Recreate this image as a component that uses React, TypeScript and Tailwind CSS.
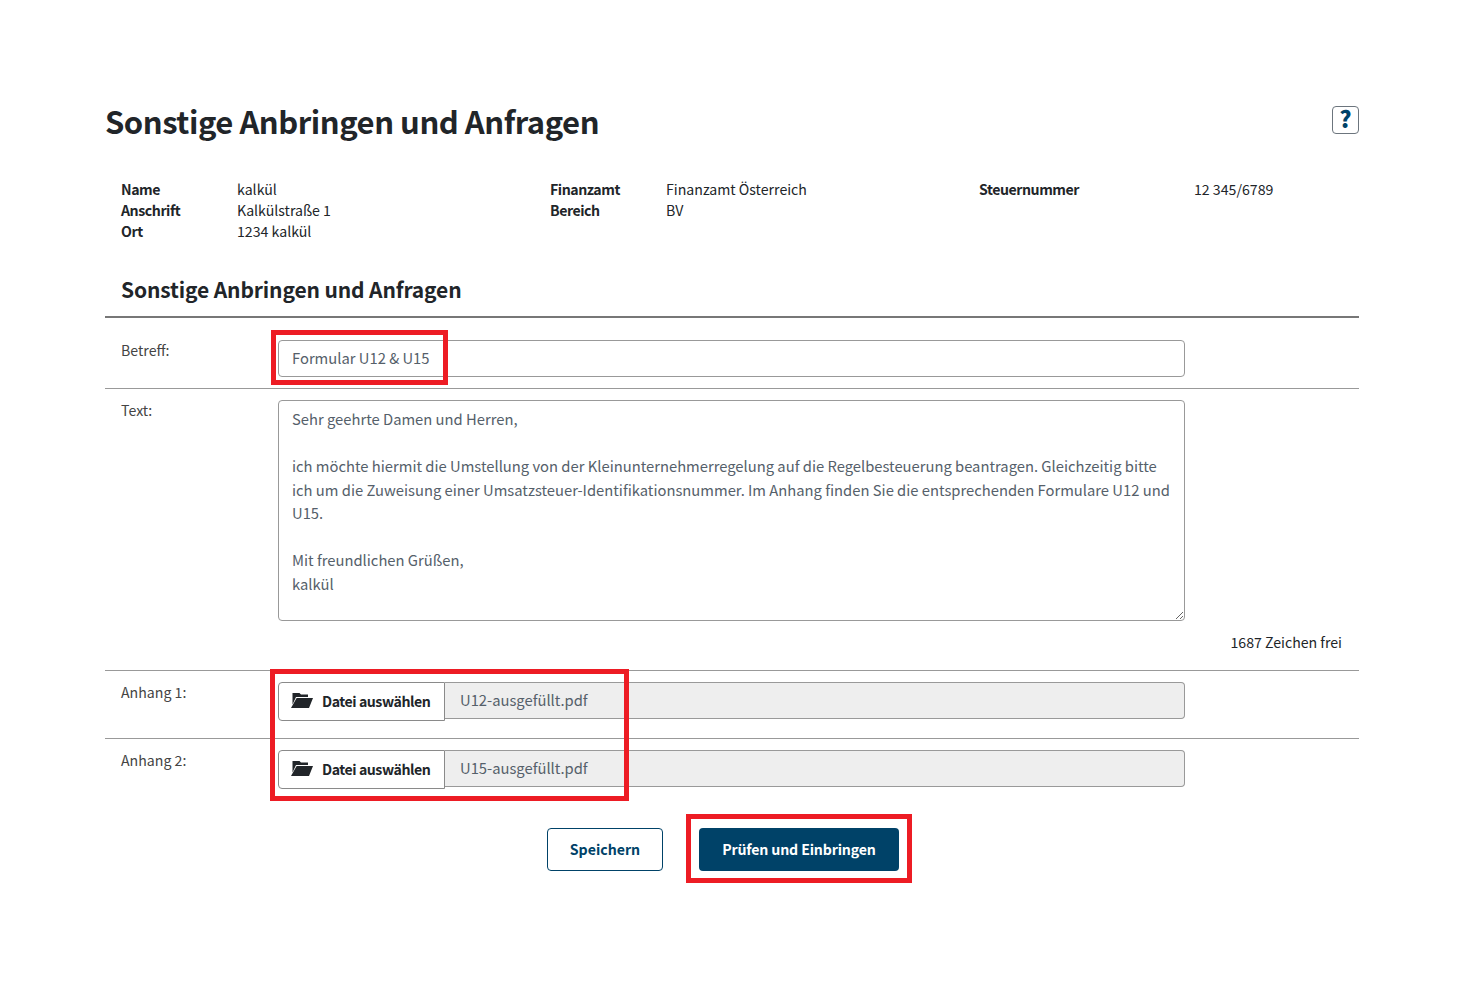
const font = { fontFamily: '"Noto Sans CJK SC", "Noto Sans", sans-serif' };

function Folder() {
  return (
    <svg width="22" height="16" viewBox="0 0 22 16" className="mb-[3px] shrink-0">
      <path d="M1.5 1H8.5L10 2.5H17V5H5L1.5 12.5z" fill="#212529" />
      <path d="M5.6 6H22L18 16H0z" fill="#212529" />
    </svg>
  );
}

function Info({ label, value, labelW }: { label: string; value: string; labelW: string }) {
  return (
    <div className="flex h-[21px] leading-[21px]">
      <div className={`${labelW} font-semibold tracking-[-0.45px]`}>{label}</div>
      <div>{value}</div>
    </div>
  );
}

function FileRow({ label, file, height }: { label: string; file: string; height: string }) {
  return (
    <div className={`flex border-t border-[#999] ${height}`}>
      <div className="w-[173px] pl-4 pt-[9px] text-[#444] leading-[24px]">{label}</div>
      <div className="flex w-[907px] pt-[11px] items-start">
        <div className="flex h-[39px] w-[167px] items-center gap-[9px] whitespace-nowrap rounded-l-[4px] border border-[#8a8a8a] pl-[12px] font-semibold tracking-[-0.45px] text-[#212529]">
          <Folder />
          <span>Datei auswählen</span>
        </div>
        <div className="flex h-[37px] flex-1 items-center rounded-r-[4px] border border-l-0 border-[#999] bg-[#eeeeee] pl-[15px] text-[14.77px] text-[#55606a]">
          {file}
        </div>
      </div>
    </div>
  );
}

const message = `Sehr geehrte Damen und Herren,

ich möchte hiermit die Umstellung von der Kleinunternehmerregelung auf die Regelbesteuerung beantragen. Gleichzeitig bitte ich um die Zuweisung einer Umsatzsteuer-Identifikationsnummer. Im Anhang finden Sie die entsprechenden Formulare U12 und U15.

Mit freundlichen Grüßen,
kalkül`;

export default function App() {
  return (
    <div className="relative h-[990px] w-[1472px] bg-white text-[14.15px] text-[#212529]" style={font}>
      <div className="ml-[105px] w-[1254px] pt-[100px]">
        <div className="flex h-[46px] items-center justify-between">
          <h1 className="mb-[4px] text-[31px] font-semibold leading-[44px] tracking-[-0.47px] text-[#212529]">Sonstige Anbringen und Anfragen</h1>
          <div className="mb-[7px] flex h-[28px] w-[27px] items-center justify-center rounded-[4px] border border-[#6c757d] pb-[2px] text-[23px] font-black leading-none text-[#004268]">?</div>
        </div>

        <div className="mt-[33px] grid grid-cols-[429px_429px_380px] pl-4">
          <div>
            <Info label="Name" value="kalkül" labelW="w-[116px]" />
            <Info label="Anschrift" value="Kalkülstraße 1" labelW="w-[116px]" />
            <Info label="Ort" value="1234 kalkül" labelW="w-[116px]" />
          </div>
          <div>
            <Info label="Finanzamt" value="Finanzamt Österreich" labelW="w-[116px]" />
            <Info label="Bereich" value="BV" labelW="w-[116px]" />
          </div>
          <div>
            <Info label="Steuernummer" value="12 345/6789" labelW="w-[215px]" />
          </div>
        </div>

        <h2 className="mt-[25px] box-content h-[49px] border-b-2 border-[#777] pl-4 text-[21px] font-semibold leading-[45px] tracking-[-0.13px] text-[#212529]">
          Sonstige Anbringen und Anfragen
        </h2>

        <div className="flex h-[70px]">
          <div className="w-[173px] pl-4 pt-[20px] leading-[24px] text-[#444]">Betreff:</div>
          <div className="w-[907px] pt-[22px]">
            <input readOnly value="Formular U12 & U15" className="h-[37px] w-full rounded-[4px] border border-[#999] bg-white px-[13px] pb-[2px] text-[14.77px] text-[#55606a] outline-none" />
          </div>
        </div>

        <div className="flex h-[282px] border-t border-[#999]">
          <div className="w-[173px] pl-4 pt-[9px] leading-[24px] text-[#444]">Text:</div>
          <div className="flex-1 pt-[11px]">
            <textarea
              readOnly
              value={message}
              className="block h-[221px] w-[907px] resize-y rounded-[4px] border border-[#999] bg-white pl-[13px] pr-[10px] py-[6px] text-[14.77px] leading-[23.5px] text-[#55606a] outline-none"
            />
            <div className="mt-[11px] pr-[17px] text-right leading-[21px] text-[#212529]">1687 Zeichen frei</div>
          </div>
        </div>

        <FileRow label="Anhang 1:" file="U12-ausgefüllt.pdf" height="h-[68px]" />
        <FileRow label="Anhang 2:" file="U15-ausgefüllt.pdf" height="h-[90px]" />

        <div className="flex justify-center gap-[36px] pr-[18px]">
          <button className="h-[43px] w-[116px] rounded-[4px] border border-[#004268] bg-white font-semibold text-[#004268]">Speichern</button>
          <button className="h-[43px] w-[200px] rounded-[4px] bg-[#004268] font-bold tracking-[-0.15px] text-white">Prüfen und Einbringen</button>
        </div>
      </div>

      <div className="pointer-events-none absolute left-[271px] top-[330px] h-[55px] w-[177px] border-[5px] border-[#ed1c24]" />
      <div className="pointer-events-none absolute left-[270px] top-[669px] h-[132px] w-[359px] border-[5px] border-[#ed1c24]" />
      <div className="pointer-events-none absolute left-[686px] top-[814px] h-[69px] w-[226px] border-[5px] border-[#ed1c24]" />
    </div>
  );
}
